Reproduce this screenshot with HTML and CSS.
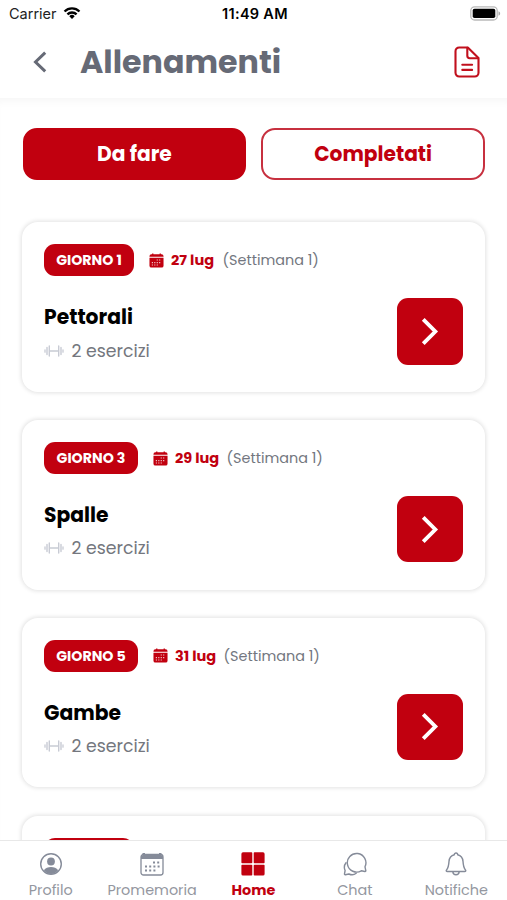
FILE: index.html
```
<!DOCTYPE html>
<html lang="it">
<head>
<meta charset="utf-8">
<meta name="viewport" content="width=device-width, initial-scale=1">
<title>Allenamenti</title>
<link rel="stylesheet" href="styles.css">
</head>
<body>
<svg class="defs" aria-hidden="true">
  <symbol id="calendar" viewBox="0 0 16 16">
    <path fill="currentColor" d="M2.500 1.400h.8V.5h1.400v.9h6.600V.5h1.400v.9h.8a2 2 0 0 1 2 2v.7H.5v-.7a2 2 0 0 1 2-2zM.5 5h15v8.500a2 2 0 0 1-2 2h-11a2 2 0 0 1-2-2z"/>
    <path stroke="#fff" stroke-opacity=".8" stroke-width="1.200" stroke-dasharray="1.200 1.400" d="M8.200 7.500h5.200M3 10.200h10.400M3 12.800h7.500"/>
  </symbol>
  <symbol id="dumbbell" viewBox="0 0 20 14">
    <path fill="none" stroke="currentColor" stroke-linecap="round" d="M1 5.800v2.400M19 5.800v2.400M5.500 7h9" stroke-width="1.300"/>
    <path fill="none" stroke="currentColor" stroke-linecap="round" d="M3 3.500v7M5.300 2v10M14.700 2v10M17 3.500v7" stroke-width="1.400"/>
  </symbol>
  <symbol id="next" viewBox="0 0 20 30">
    <path fill="none" stroke="currentColor" stroke-width="4" d="M3 2.500 15.500 15 3 27.500"/>
  </symbol>
</svg>
<div class="app">
  <div class="status">
    <div class="carrier"><span>Carrier</span>
      <svg width="18" height="14" viewBox="0 0 20 15"><g fill="none" stroke="#000" stroke-width="2.600"><path d="M1.700 5.800a11.800 11.800 0 0 1 16.600 0"/><path d="M4.900 9.100a7.200 7.200 0 0 1 10.200 0"/></g><path d="M10 14.200 7 11.100a4.200 4.200 0 0 1 6 0z"/></svg>
    </div>
    <div class="clock">11:49 AM</div>
    <svg class="battery" width="31" height="15" viewBox="0 0 31 15"><rect x=".8" y=".8" width="26.400" height="13.200" rx="3.800" fill="#fff" stroke="#b9b9b9" stroke-width="1.300"/><rect x="2.700" y="2.700" width="22.600" height="9.400" rx="1.800"/><path d="M28.500 5.200c2.200.8 2.200 3.700 0 4.500z" fill="#aaa"/></svg>
  </div>
  <header class="header">
    <svg class="back" width="16" height="22" viewBox="0 0 16 22"><path d="M13.200 1.700 3.500 11l9.700 9.300" fill="none" stroke="currentColor" stroke-width="3"/></svg>
    <h1>Allenamenti</h1>
    <svg class="doc" width="26" height="32" viewBox="0 0 26 32"><g fill="none" stroke="currentColor" stroke-width="2.100" stroke-linejoin="round" stroke-linecap="round"><path d="M5.200 1.500h8.600L24.500 12v14.800a3.700 3.700 0 0 1-3.700 3.700H5.200a3.700 3.700 0 0 1-3.700-3.700V5.200a3.700 3.700 0 0 1 3.700-3.700z"/><path d="M13.300 1.700v8.100c0 1.600.8 2.400 2.400 2.400h8.300M8.300 18.700h9.800M8.300 23.900h9.800"/></g></svg>
  </header>
  <main class="content">
    <div class="tabs"><button class="tab active">Da fare</button><button class="tab">Completati</button></div>
    <div class="list">
      <article class="card">
        <div class="meta"><span class="badge first">GIORNO 1</span><svg class="cal"><use href="#calendar"/></svg><b>27 lug</b><span class="week">(Settimana 1)</span></div>
        <div class="body"><div><h2>Pettorali</h2><p><svg class="weights"><use href="#dumbbell"/></svg><span>2 esercizi</span></p></div><button class="go" aria-label="Apri"><svg><use href="#next"/></svg></button></div>
      </article>
      <article class="card">
        <div class="meta"><span class="badge">GIORNO 3</span><svg class="cal"><use href="#calendar"/></svg><b>29 lug</b><span class="week">(Settimana 1)</span></div>
        <div class="body"><div><h2>Spalle</h2><p><svg class="weights"><use href="#dumbbell"/></svg><span>2 esercizi</span></p></div><button class="go" aria-label="Apri"><svg><use href="#next"/></svg></button></div>
      </article>
      <article class="card">
        <div class="meta"><span class="badge">GIORNO 5</span><svg class="cal"><use href="#calendar"/></svg><b class="short">31 lug</b><span class="week">(Settimana 1)</span></div>
        <div class="body"><div><h2>Gambe</h2><p><svg class="weights"><use href="#dumbbell"/></svg><span>2 esercizi</span></p></div><button class="go" aria-label="Apri"><svg><use href="#next"/></svg></button></div>
      </article>
      <article class="card">
        <div class="meta"><span class="badge first"></span></div>
      </article>
    </div>
  </main>
  <nav class="nav">
    <a><svg viewBox="0 0 24 24"><circle cx="12" cy="12" r="10.300" fill="none" stroke="currentColor" stroke-width="1.400"/><circle cx="12" cy="9.500" r="3.900" fill="currentColor"/><path d="M4.800 18.200c1.700-2.600 4.300-3.300 7.200-3.300s5.500.7 7.200 3.300A10 10 0 0 1 12 22a10 10 0 0 1-7.200-3.800z" fill="currentColor"/></svg><span>Profilo</span></a>
    <a><svg viewBox="0 0 24 24"><rect x="1" y="2.500" width="22" height="20.500" rx="2.500" fill="none" stroke="currentColor" stroke-width="1.300"/><path d="M1 3.500h1.500V1H5v1.500h14V1h2.500v2.500H23V7H1z" fill="currentColor"/><path d="M13 10.500h7M5 14.500h15M5 18.500h11" stroke="currentColor" stroke-width="1.800" stroke-dasharray="2 2.200"/></svg><span>Promemoria</span></a>
    <a class="active"><svg viewBox="0 0 24 24"><path fill="currentColor" d="M2 .3h8.500q.8 0 .8.800v9.300q0 .8-.8.800H1.300q-.9 0-.9-.8V2Q.4.300 2 .3zM13.500.3H22q1.600 0 1.600 1.700v8.400q0 .8-.8.800h-9.300q-.8 0-.8-.8V1.100q0-.8.800-.8zM1.200 12.700h9.300q.8 0 .8.800v9.300q0 .8-.8.800H2q-1.600 0-1.600-1.700v-8.400q0-.8.800-.8zM13.500 12.700h9.300q.8 0 .8.800v8.400q0 1.700-1.600 1.700h-8.500q-.8 0-.8-.8v-9.300q0-.8.800-.8z"/></svg><span>Home</span></a>
    <a><svg viewBox="0 0 24 24"><g fill="none" stroke="currentColor" stroke-width="1.400" stroke-linecap="round" stroke-linejoin="round"><path d="M22 14.800l.8 3.800c.1.700-.2 1-.9.900l-3.600-.7a9.300 9.300 0 1 1 3.700-4z"/><path d="M3 10.800c-2 2.500-2 5.300-.9 7.700l-.6 3.300c-.1.700.2 1 .9.900l3.500-.7c2.600 1.200 5.300.9 7.300-.7"/></g></svg><span>Chat</span></a>
    <a><svg viewBox="0 0 24 24"><g fill="none" stroke="currentColor" stroke-width="1.400" stroke-linejoin="round"><path d="M10.300 2.800C10.300.3 13.700.3 13.700 2.800c3.300.8 5 3.200 5.300 6.600.3 4.300.8 6.600 2.300 8.300.9 1 .5 1.800-.7 1.800H3.400c-1.200 0-1.600-.8-.7-1.800C4.200 16 4.700 13.700 5 9.400c.3-3.400 2-5.800 5.300-6.600z"/><path d="M8.800 19.600c.4 4.200 6 4.200 6.400 0"/></g></svg><span>Notifiche</span></a>
  </nav>
</div>
</body>
</html>
```
FILE: styles.css
```
* { box-sizing: border-box; }
body { margin: 0; background: #fff; font-family: Poppins, Inter, "Open Sans", sans-serif; }
h1, h2, p { margin: 0; }
button { border: 0; padding: 0; font: inherit; }
span, b, h1, h2 { white-space: nowrap; }
.defs { display: none; }
.app { height: 900px; display: flex; flex-direction: column; overflow: hidden; }
.status { height: 27px; flex: none; display: grid; grid-template-columns: 1fr auto 1fr; align-items: center; padding: 0 6px 0 9px; font-family: Inter, sans-serif; font-size: 14.500px; }
.carrier { display: flex; align-items: center; gap: 6px; color: #222; }
.carrier svg { margin-top: -2px; }
.clock { font-weight: 600; letter-spacing: .3px; }
.battery { justify-self: end; }
.header { height: 71px; flex: none; display: flex; align-items: center; padding: 0 27px 1px 32px; color: #666a76; }
.header h1 { flex: 1; margin-left: 32px; font-size: 31.700px; line-height: 40px; font-weight: 700; }
.doc { color: #c1101d; }
.content { flex: 1; min-height: 0; overflow: hidden; padding: 30px 22px 0; box-shadow: inset 0 8px 8px -5px #f6f6f6; }
.tabs { display: grid; grid-template-columns: 1fr 1fr; gap: 15px; padding-left: .5px; }
.tab { height: 52px; border: 2px solid #c7303f; border-radius: 14px; background: #fff; color: #c1000f; font-size: 20.200px; font-weight: 700; }
.tab.active { background: #c1000f; border-color: #c1000f; color: #fff; }
.list { display: flex; flex-direction: column; gap: 28.300px; margin-top: 42.300px; }
.card { height: 169.500px; flex: none; border-radius: 16px; padding: 22px 22px 0; background: #fff; box-shadow: 0 0 4px 1px #e2e2e2; }
.meta { display: flex; align-items: center; height: 32px; }
.badge { width: 94px; height: 32px; padding-top: 1px; border-radius: 11px; background: #c1000f; color: #fff; display: flex; align-items: center; justify-content: center; font-size: 14.200px; font-weight: 700; }
.badge.first { width: 90px; }
.cal { width: 15px; height: 15px; margin: 0 7px 0 15px; color: #c1000f; }
.meta b { width: 43px; padding-top: 1px; font-size: 14.500px; color: #c1000f; }
.meta b.short { width: 40px; }
.week { margin-left: 8.500px; padding-top: 1px; font-size: 14.400px; color: #737780; }
.body { display: flex; justify-content: space-between; margin-top: 21.800px; }
.body h2 { font-size: 20.300px; line-height: 30px; margin-top: 4px; font-weight: 700; }
.body p { display: flex; align-items: center; gap: 7.500px; height: 28px; margin-top: 4.500px; font-size: 17.300px; color: #74777e; }
.weights { width: 20px; height: 14px; color: #c8cbd4; }
.go { width: 66.500px; height: 66.500px; border-radius: 11px; background: #c1000f; color: #fff; display: flex; align-items: center; justify-content: center; }
.go svg { width: 20px; height: 29px; }
.nav { height: 60px; flex: none; display: grid; grid-template-columns: repeat(5, 1fr); border-top: 1px solid #e8e8e8; background: #fff; color: #9497a0; font-size: 14.400px; }
.nav a { display: flex; flex-direction: column; align-items: center; padding-top: 11px; min-width: 0; }
.nav svg { width: 24px; height: 24px; color: #858b99; }
.nav span { line-height: 20px; margin-top: 4px; }
.nav .active, .nav .active svg { color: #c1000f; font-weight: 700; }
```
